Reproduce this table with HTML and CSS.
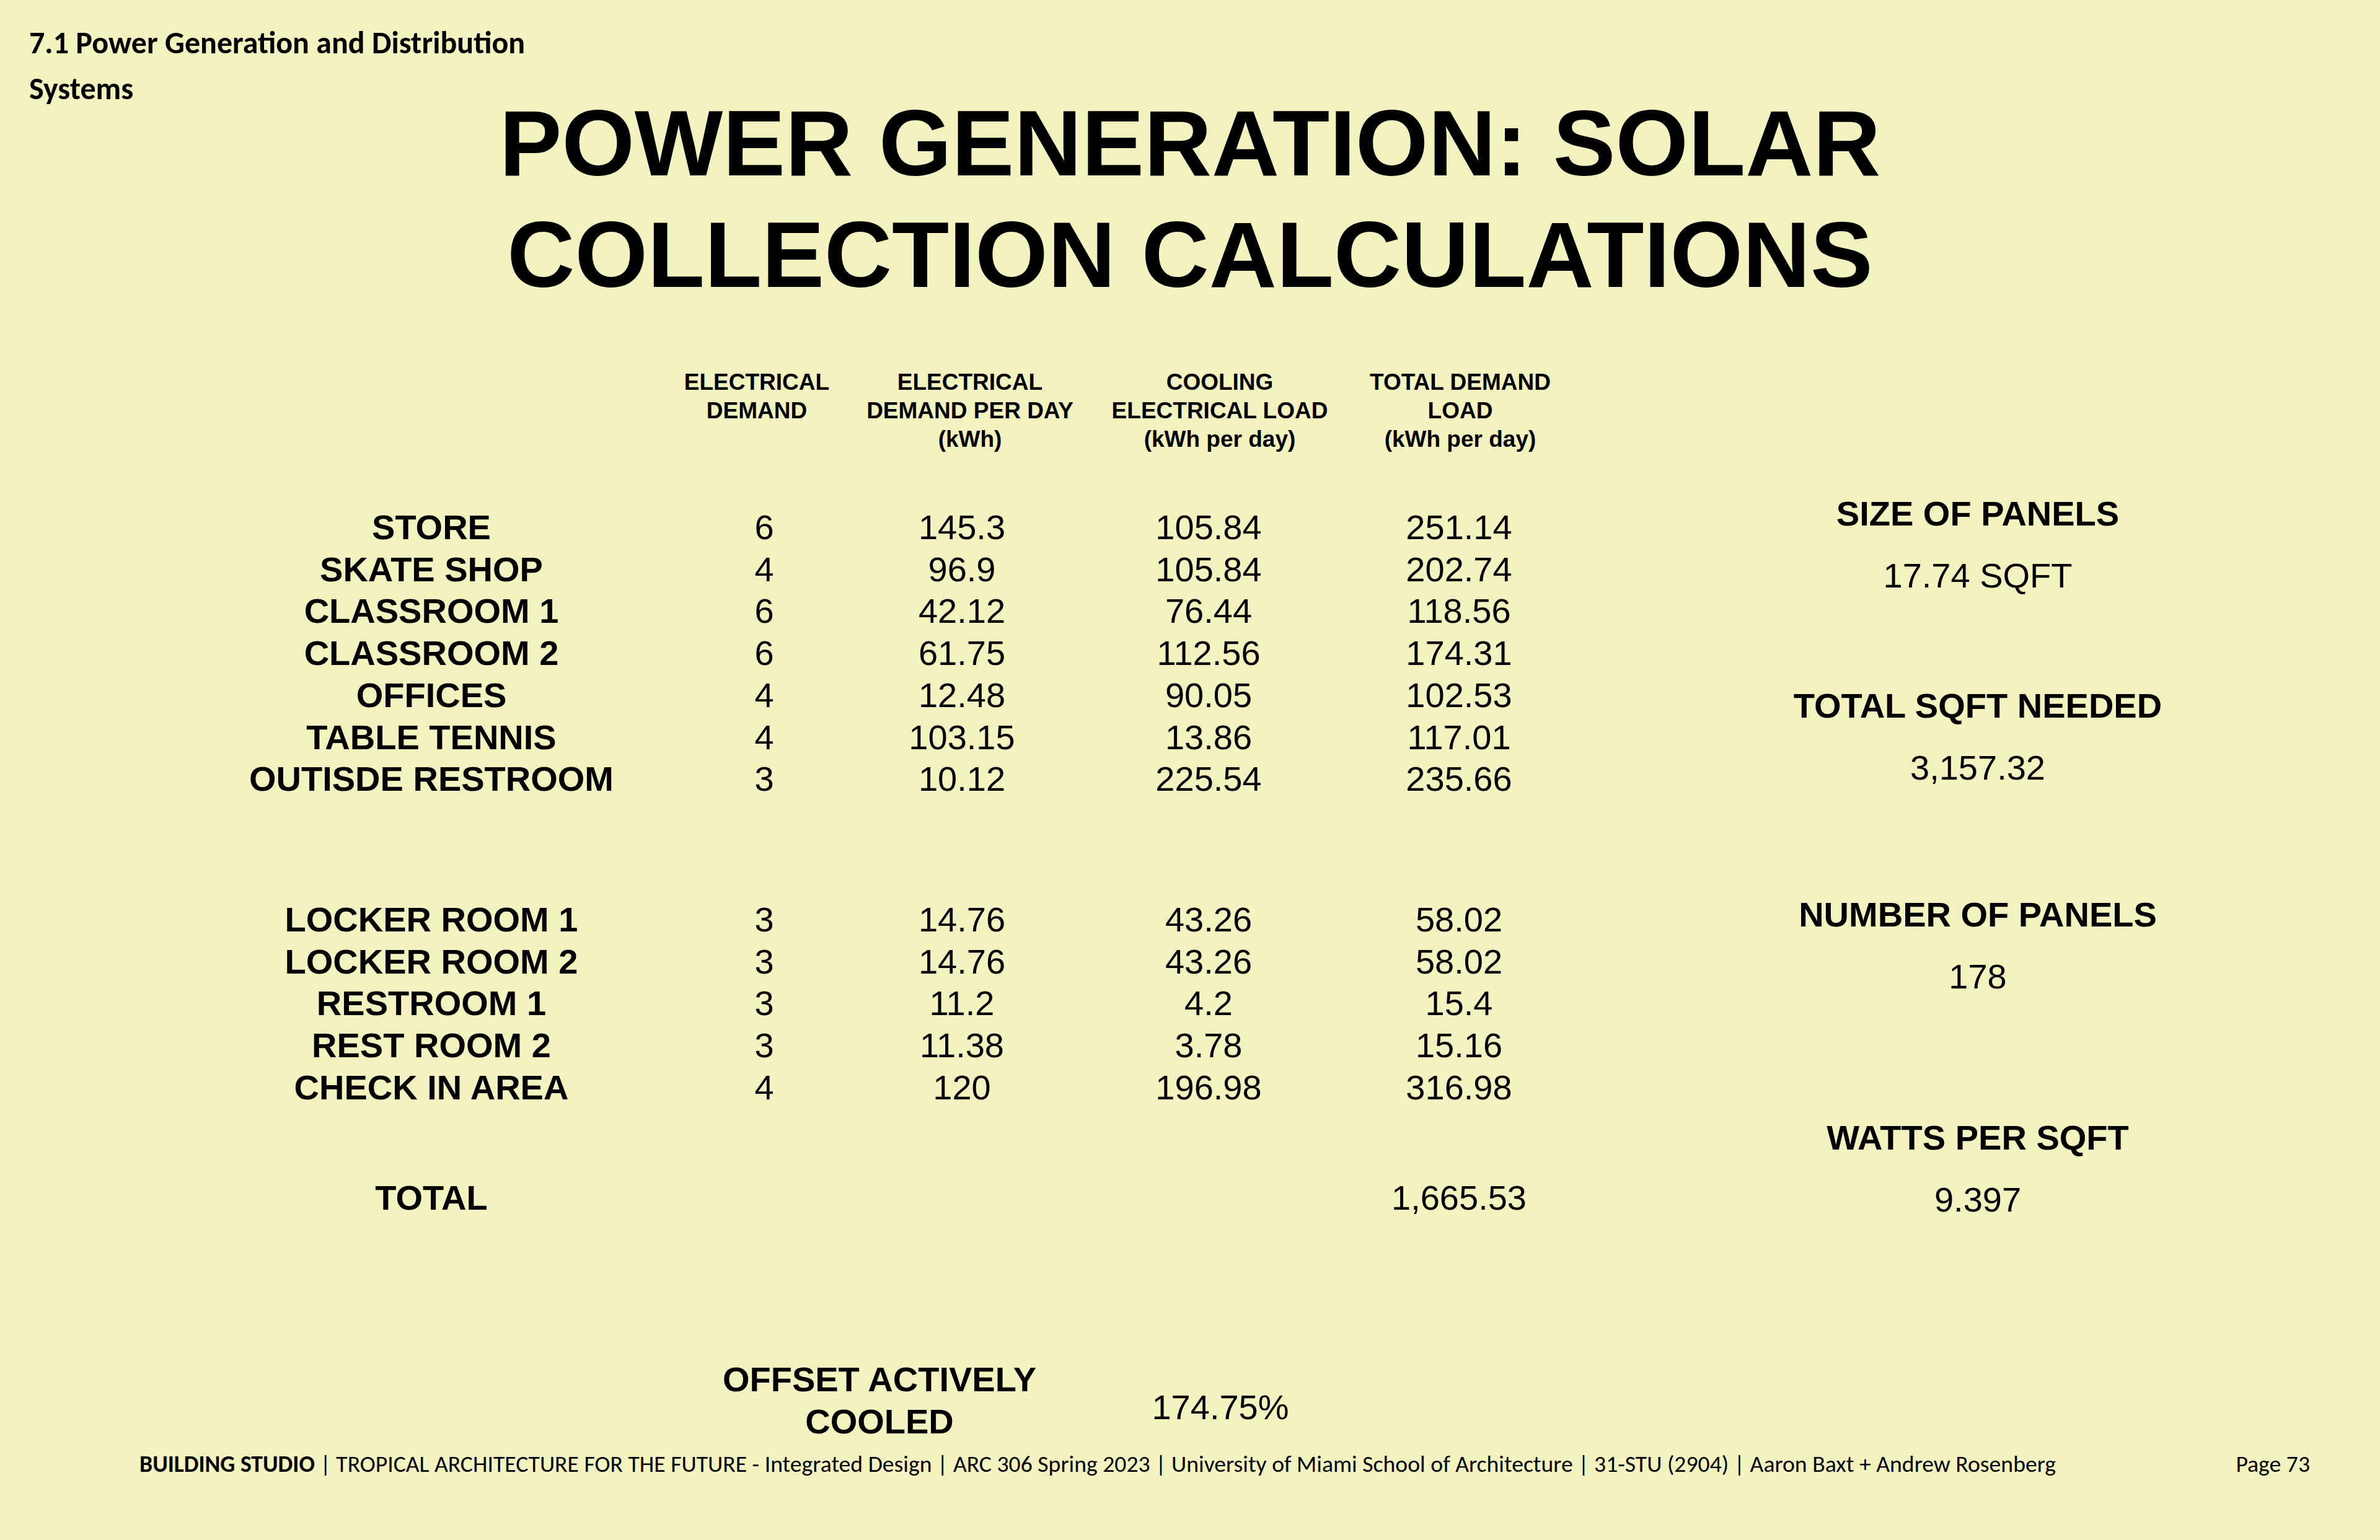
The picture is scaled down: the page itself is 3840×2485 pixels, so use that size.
FILE: index.html
```html
<!DOCTYPE html>
<html lang="en">
<head>
<meta charset="utf-8">
<title>Power Generation: Solar Collection Calculations</title>
<link rel="stylesheet" href="styles.css">
</head>
<body>
<div class="page">
  <div class="section-label">7.1 Power Generation and Distribution<br>Systems</div>

  <h1 class="title">POWER GENERATION: SOLAR<br>COLLECTION CALCULATIONS</h1>

  <div class="main">
    <div class="table">
      <div class="row head">
        <div></div>
        <div class="h2">ELECTRICAL<br>DEMAND</div>
        <div class="h3">ELECTRICAL<br>DEMAND PER DAY<br>(kWh)</div>
        <div class="h4">COOLING<br>ELECTRICAL LOAD<br>(kWh per day)</div>
        <div class="h5">TOTAL DEMAND<br>LOAD<br>(kWh per day)</div>
      </div>

      <div class="group group-1">
        <div class="row"><div class="lbl">STORE</div><div>6</div><div>145.3</div><div>105.84</div><div>251.14</div></div>
        <div class="row"><div class="lbl">SKATE SHOP</div><div>4</div><div>96.9</div><div>105.84</div><div>202.74</div></div>
        <div class="row"><div class="lbl">CLASSROOM 1</div><div>6</div><div>42.12</div><div>76.44</div><div>118.56</div></div>
        <div class="row"><div class="lbl">CLASSROOM 2</div><div>6</div><div>61.75</div><div>112.56</div><div>174.31</div></div>
        <div class="row"><div class="lbl">OFFICES</div><div>4</div><div>12.48</div><div>90.05</div><div>102.53</div></div>
        <div class="row"><div class="lbl">TABLE TENNIS</div><div>4</div><div>103.15</div><div>13.86</div><div>117.01</div></div>
        <div class="row"><div class="lbl">OUTISDE RESTROOM</div><div>3</div><div>10.12</div><div>225.54</div><div>235.66</div></div>
      </div>

      <div class="group group-2">
        <div class="row"><div class="lbl">LOCKER ROOM 1</div><div>3</div><div>14.76</div><div>43.26</div><div>58.02</div></div>
        <div class="row"><div class="lbl">LOCKER ROOM 2</div><div>3</div><div>14.76</div><div>43.26</div><div>58.02</div></div>
        <div class="row"><div class="lbl">RESTROOM 1</div><div>3</div><div>11.2</div><div>4.2</div><div>15.4</div></div>
        <div class="row"><div class="lbl">REST ROOM 2</div><div>3</div><div>11.38</div><div>3.78</div><div>15.16</div></div>
        <div class="row"><div class="lbl">CHECK IN AREA</div><div>4</div><div>120</div><div>196.98</div><div>316.98</div></div>
      </div>

      <div class="group group-total">
        <div class="row"><div class="lbl">TOTAL</div><div></div><div></div><div></div><div>1,665.53</div></div>
      </div>
    </div>

    <div class="side">
      <div class="stat">
        <div class="stat-head">SIZE OF PANELS</div>
        <div class="stat-val">17.74 SQFT</div>
      </div>
      <div class="stat">
        <div class="stat-head">TOTAL SQFT NEEDED</div>
        <div class="stat-val">3,157.32</div>
      </div>
      <div class="stat">
        <div class="stat-head">NUMBER OF PANELS</div>
        <div class="stat-val">178</div>
      </div>
      <div class="stat">
        <div class="stat-head">WATTS PER SQFT</div>
        <div class="stat-val">9.397</div>
      </div>
    </div>
  </div>

  <div class="offset">
    <div class="offset-label">OFFSET ACTIVELY<br>COOLED</div>
    <div class="offset-value">174.75%</div>
  </div>

  <footer class="footer">
    <div class="footer-text"><b>BUILDING STUDIO</b> | TROPICAL ARCHITECTURE FOR THE FUTURE - Integrated Design | ARC 306 Spring 2023 | University of Miami School of Architecture | 31-STU (2904) | Aaron Baxt + Andrew Rosenberg</div>
    <div class="footer-page">Page 73</div>
  </footer>
</div>
</body>
</html>
```

FILE: styles.css
```css
* {
  box-sizing: border-box;
}

html, body {
  margin: 0;
  padding: 0;
  background: #f3f3c0;
}

.page {
  width: 3840px;
  height: 2485px;
  background: #f3f3c0;
  color: #000;
  font-family: "Liberation Sans", Arial, sans-serif;
  overflow: hidden;
}

/* top-left section label (Calibri-like) */
.section-label {
  font-family: Carlito, Calibri, Lato, sans-serif;
  font-weight: 700;
  font-size: 50px;
  line-height: 74px;
  padding: 32px 0 0 47px;
  height: 182px;
}

/* main title */
.title {
  margin: -41px 0 0 0;
  font-size: 151px;
  line-height: 180px;
  font-weight: 700;
  text-align: center;
  letter-spacing: 0;
}

.main {
  display: flex;
  align-items: flex-start;
  margin-top: 93px;
}

.table {
  width: 2542px;
  padding-left: 296px;
  flex: none;
}

.row {
  display: grid;
  grid-template-columns: 800px 274px 364px 432px 376px;
  text-align: center;
  font-size: 56px;
  line-height: 67.7px;
  white-space: nowrap;
}

.row .lbl {
  font-weight: 700;
}

.row.head {
  font-size: 37px;
  line-height: 46px;
  font-weight: 700;
  height: 138px;
}

.head .h2 { padding-right: 24px; }
.head .h3 { padding-left: 26px; }
.head .h4 { padding-left: 36px; }
.head .h5 { padding-left: 4px; }

.group-1 { margin-top: 85px; }
.group-2 { margin-top: 159px; }
.group-total { margin-top: 111px; }

/* right-hand stats */
.side {
  width: 1298px;
  flex: none;
  text-align: center;
  font-size: 56px;
  line-height: 67.7px;
  margin-bottom: -60px;
}

.stat-head {
  font-weight: 700;
}

.stat-val {
  margin-top: 32.5px;
}

.stat:nth-child(1) { margin-top: 201px; }
.stat:nth-child(2) { margin-top: 142px; }
.stat:nth-child(3) { margin-top: 169px; }
.stat:nth-child(4) { margin-top: 192px; }

/* offset */
.offset {
  display: flex;
  align-items: flex-start;
  padding-left: 1119px;
  margin-top: 225px;
  font-size: 56px;
  line-height: 68px;
  text-align: center;
}

.offset-label {
  width: 600px;
  font-weight: 700;
}

.offset-value {
  width: 400px;
  margin-left: 50px;
  margin-top: 45px;
}

/* footer */
.footer {
  display: flex;
  align-items: baseline;
  margin-top: 12px;
  padding: 0 113px 0 225px;
  font-family: Carlito, Calibri, Lato, sans-serif;
  font-size: 37.7px;
  line-height: 45px;
  white-space: nowrap;
}

.footer-text b {
  font-weight: 700;
}

.footer-page {
  margin-left: auto;
}
```
